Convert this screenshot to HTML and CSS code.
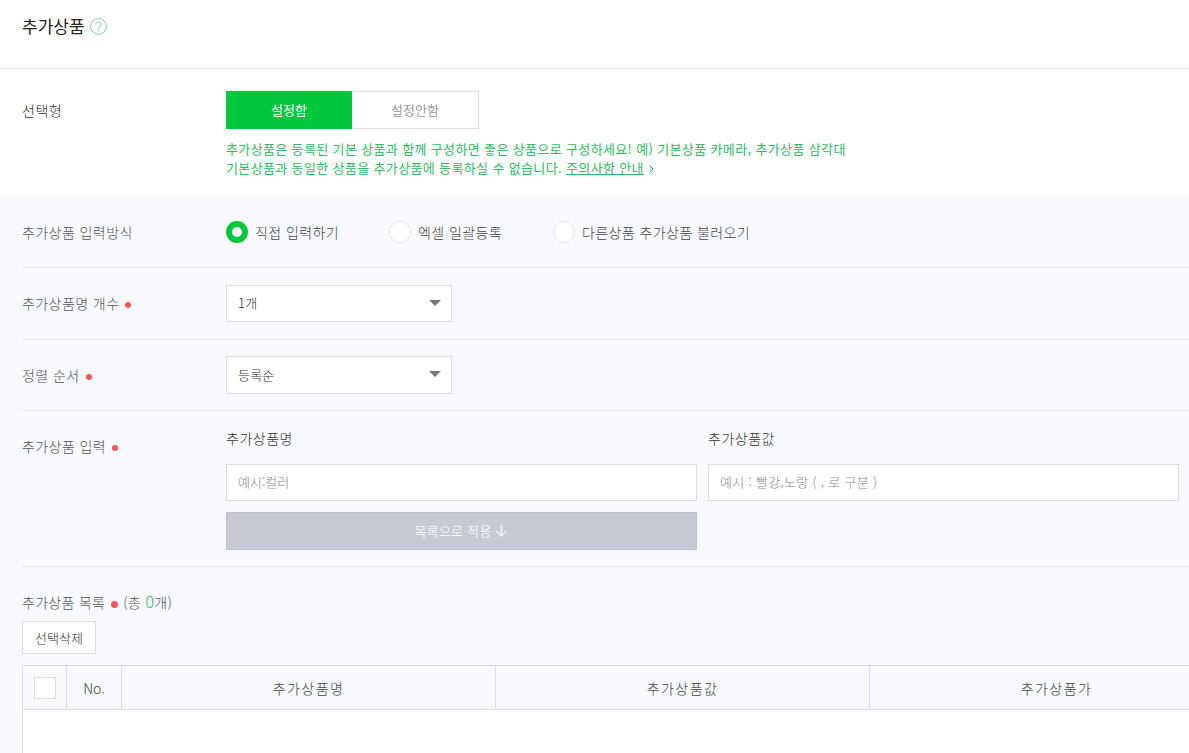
FILE: index.html
```html
<!DOCTYPE html>
<html lang="ko">
<head>
<meta charset="utf-8">
<title>추가상품</title>
<link rel="stylesheet" href="styles.css">
</head>
<body>
<header class="head">
  <h2 class="title">추가상품</h2>
  <svg class="help" width="17" height="17" viewBox="0 0 17 17"><circle cx="8.5" cy="8.5" r="7.9" fill="none" stroke="#7fcb9b"/><path d="M5.8 6.6c0-1.6 1.2-2.6 2.7-2.6s2.7 1 2.7 2.4c0 2.1-2.7 2.1-2.7 4.3" fill="none" stroke="#7fcb9b"/><rect x="8" y="12" width="1" height="1.4" fill="#7fcb9b"/></svg>
</header>
<section class="select">
  <div class="select-label">선택형</div>
  <div class="select-body">
    <div class="toggle">
      <div class="tg on">설정함</div>
      <div class="tg off">설정안함</div>
    </div>
    <p class="note">추가상품은 등록된 기본 상품과 함께 구성하면 좋은 상품으로 구성하세요! 예) 기본상품 카메라, 추가상품 삼각대<br>기본상품과 동일한 상품을 추가상품에 등록하실 수 없습니다. <a class="note-link">주의사항 안내</a> <svg class="chev" width="5" height="8" viewBox="0 0 5 8"><path d="M.5.7 4 4 .5 7.3" fill="none" stroke="#00a84a"/></svg></p>
  </div>
</section>
<main class="panel">
  <div class="row row-method">
    <div class="label">추가상품 입력방식</div>
    <div class="radios">
      <div class="radio r1"><span class="dot on"></span>직접 입력하기</div>
      <div class="radio r2"><span class="dot"></span>엑셀 일괄등록</div>
      <div class="radio"><span class="dot"></span>다른상품 추가상품 불러오기</div>
    </div>
  </div>
  <div class="row row-count">
    <div class="label">추가상품명 개수<i class="req"></i></div>
    <div class="sel">1개<span class="arrow"></span></div>
  </div>
  <div class="row row-sort">
    <div class="label">정렬 순서<i class="req"></i></div>
    <div class="sel">등록순<span class="arrow"></span></div>
  </div>
  <div class="row row-input">
    <div class="label">추가상품 입력<i class="req"></i></div>
    <div class="inputs">
      <div class="col col-name">
        <div class="col-title">추가상품명</div>
        <div class="field">예시:컬러</div>
        <div class="apply">목록으로 적용
          <svg width="13" height="13" viewBox="0 0 13 13"><path d="M6.5 1v11M1.5 7l5 5 5-5" fill="none" stroke="#eef0f4" stroke-width="1.6"/></svg>
        </div>
      </div>
      <div class="col col-value">
        <div class="col-title">추가상품값</div>
        <div class="field field-wide">예시 : 빨강,노랑 ( , 로 구분 )</div>
      </div>
    </div>
  </div>
  <div class="list">
    <div class="list-title">추가상품 목록<i class="req"></i>(총 <b class="zero">0</b>개)</div>
    <div class="del">선택삭제</div>
    <div class="table">
      <div class="thead">
        <div class="th th-check"><span class="check"></span></div>
        <div class="th th-no">No.</div>
        <div class="th th-col">추가상품명</div>
        <div class="th th-col">추가상품값</div>
        <div class="th th-col">추가상품가</div>
      </div>
      <div class="tbody"></div>
    </div>
  </div>
</main>
</body>
</html>
```

FILE: styles.css
```css
* { box-sizing: border-box; }
html, body { margin: 0; padding: 0; height: 753px; overflow: hidden; }
body {
  width: 1189px;
  background: #fff;
  color: #444;
  font-family: "Noto Sans CJK KR", "Noto Sans", sans-serif;
  font-size: 13px;
  font-weight: 300;
  line-height: 18px;
}
.head {
  height: 69px;
  border-bottom: 1px solid #e5e5e5;
  padding: 17px 0 0 22px;
  display: flex;
  align-items: flex-start;
  gap: 5px;
}
.title { margin: 0; font-size: 17px; line-height: 18px; font-weight: 400; color: #222; }
.help { margin-top: 1px; }
.select { height: 128px; display: flex; padding: 22px 0 0 22px; }
.select-label { width: 204px; font-size: 14px; letter-spacing: .6px; line-height: 38px; color: #333; }
.toggle { display: flex; height: 38px; }
.tg { width: 126px; text-align: center; line-height: 36px; border: 1px solid #ddd; }
.tg.on { background: #00c73c; border-color: #00c73c; color: #fff; font-weight: 400; }
.tg.off { width: 127px; border-left: 0; color: #666; }
.note { margin: 10px 0 0; font-size: 13px; font-weight: 400; letter-spacing: .36px; line-height: 19px; color: #2dbb63; white-space: nowrap; }
.note-link { text-decoration: underline; }
.chev { margin-left: 1px; }
.panel { background: #f8f9fd; height: 556px; padding-left: 22px; }
.row { display: flex; border-bottom: 1px solid #e4e6ea; }
.label { width: 204px; flex: none; color: #555; font-size: 14px; letter-spacing: .42px; }
.row-method { height: 71px; padding-top: 24px; }
.row-count { height: 72px; padding-top: 17px; }
.row-sort { height: 71px; padding-top: 16px; }
.row-input { height: 156px; padding-top: 18px; }
.row-method .label { padding-top: 2px; }
.row-count .label { padding-top: 9px; }
.row-sort .label { padding-top: 10px; }
.row-input .label { padding-top: 8px; }
.radios { display: flex; }
.radio { display: flex; align-items: center; height: 22px; color: #444; font-size: 14px; letter-spacing: .4px; }
.r1 { width: 163px; }
.r2 { width: 164px; }
.dot { width: 22px; height: 22px; border-radius: 50%; border: 1px solid #e6e6e6; background: #fff; margin-right: 7px; }
.dot.on { border: 6px solid #00c73c; }
.req { display: inline-block; width: 6px; height: 6px; border-radius: 50%; background: #f9535c; margin: 0 4px 1px 6px; vertical-align: middle; }
.sel { position: relative; width: 226px; height: 37px; border: 1px solid #ddd; background: #fff; padding-left: 11px; line-height: 33px; color: #333; letter-spacing: .2px; }
.row-sort .sel { height: 38px; line-height: 35px; }
.arrow { position: absolute; right: 10px; top: 14px; border: 6px solid transparent; border-top: 6px solid #777; border-bottom: 0; }
.inputs { display: flex; gap: 11px; }
.col { width: 471px; }
.col-title { height: 35px; color: #333; font-size: 14px; letter-spacing: .5px; line-height: 18px; }
.field { height: 37px; border: 1px solid #ddd; background: #fff; padding-left: 11px; line-height: 33px; color: #888; }
.field-wide { letter-spacing: .3px; }
.apply { margin-top: 11px; height: 38px; background: #c5cad6; border: 1px solid #bcc1cd; display: flex; align-items: center; justify-content: center; gap: 4px; color: #f4f5f8; font-weight: 400; letter-spacing: .2px; padding-bottom: 1px; }
.list { padding-top: 26px; }
.list-title { height: 18px; color: #555; font-size: 14px; letter-spacing: .3px; }
.list-title .req { width: 7px; height: 7px; margin: 0 5px 0 6px; }
.zero { font-weight: 300; font-size: 16px; line-height: 1; color: #1fb552; }
.del { margin-top: 10px; width: 74px; height: 33px; border: 1px solid #ddd; background: #fff; text-align: center; line-height: 31px; color: #333; }
.table { margin-top: 11px; border-left: 1px solid #d9dbe3; border-top: 1px solid #d9dbe3; background: #fff; height: 120px; }
.thead { display: flex; height: 44px; background: #f8f9fd; border-bottom: 1px solid #d9dbe3; }
.th { flex: none; display: flex; align-items: center; justify-content: center; color: #444; border-right: 1px solid #d9dbe3; }
.th-check { width: 44px; }
.th-no { width: 55px; font-size: 14px; }
.th-col { width: 374px; font-size: 14px; letter-spacing: 1.4px; }
.check { width: 22px; height: 22px; background: #fff; border: 1px solid #ddd; }
```
